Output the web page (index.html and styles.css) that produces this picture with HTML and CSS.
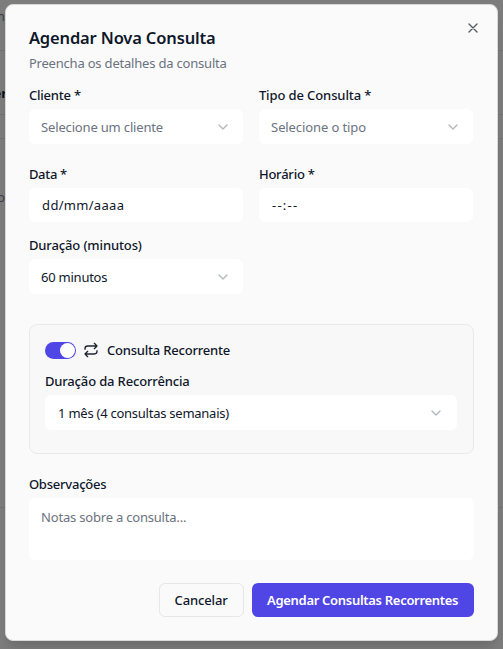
FILE: index.html
```html
<!DOCTYPE html>
<html lang="pt-BR">
<head>
<meta charset="utf-8">
<title>Agendar Nova Consulta</title>
<link rel="stylesheet" href="styles.css">
</head>
<body>
<div class="backdrop">
  <span class="behind behind-a">m</span>
  <span class="behind behind-b">er</span>
  <span class="behind behind-c">o</span>
  <i class="rule rule-a"></i><i class="rule rule-b"></i><i class="rule rule-c"></i><i class="rule rule-d"></i>
</div>
<main class="dialog">
  <button class="close" aria-label="Fechar"><svg width="16" height="16" viewBox="0 0 24 24"><path d="M18 6 6 18M6 6l12 12"/></svg></button>
  <h1><span class="t t-title">Agendar Nova Consulta</span></h1>
  <p class="subtitle"><span class="t t-sub">Preencha os detalhes da consulta</span></p>
  <div class="grid">
    <div class="field client">
      <label><span class="t t-client">Cliente *</span></label>
      <div class="control select muted"><span class="t t-selclient">Selecione um cliente</span><svg class="chev" viewBox="0 0 24 24"><path d="m6 9 6 6 6-6"/></svg></div>
    </div>
    <div class="field client">
      <label><span class="t t-type">Tipo de Consulta *</span></label>
      <div class="control select muted"><span class="t t-seltype">Selecione o tipo</span><svg class="chev" viewBox="0 0 24 24"><path d="m6 9 6 6 6-6"/></svg></div>
    </div>
    <div class="field date">
      <label><span class="t t-data">Data *</span></label>
      <div class="control input"><span class="t t-date">dd/mm/aaaa</span></div>
    </div>
    <div class="field date">
      <label><span class="t t-hour">Horário *</span></label>
      <div class="control input"><span class="t t-time">--:--</span></div>
    </div>
    <div class="field">
      <label><span class="t t-dur">Duração (minutos)</span></label>
      <div class="control select"><span class="t t-sixty">60 minutos</span><svg class="chev" viewBox="0 0 24 24"><path d="m6 9 6 6 6-6"/></svg></div>
    </div>
  </div>
  <section class="recurring">
    <div class="toggle-row">
      <span class="switch"><span class="knob"></span></span>
      <svg class="repeat" viewBox="0 0 24 24"><path d="m17 2 4 4-4 4M3 11v-1a4 4 0 0 1 4-4h14M7 22l-4-4 4-4M21 13v1a4 4 0 0 1-4 4H3"/></svg>
      <label><span class="t t-rec">Consulta Recorrente</span></label>
    </div>
    <label><span class="t t-recdur">Duração da Recorrência</span></label>
    <div class="control select month"><span class="t t-month">1 mês (4 consultas semanais)</span><svg class="chev" viewBox="0 0 24 24"><path d="m6 9 6 6 6-6"/></svg></div>
  </section>
  <div class="field notes">
    <label><span class="t t-obs">Observações</span></label>
    <div class="control area muted"><span class="t t-notes">Notas sobre a consulta...</span></div>
  </div>
  <footer>
    <button class="btn cancel"><span class="t t-cancel">Cancelar</span></button>
    <button class="btn primary"><span class="t t-submit">Agendar Consultas Recorrentes</span></button>
  </footer>
</main>
</body>
</html>
```
FILE: styles.css
```css
* { box-sizing: border-box; }
html, body { margin: 0; height: 100%; overflow: hidden; }
body {
  font: 13px/18px "Noto Sans", "Open Sans", sans-serif;
  color: #0f172a;
  background: #7d7d7d;
  padding: 4px 5px 8px 5px;
}
button { font: inherit; color: inherit; margin: 0; padding: 0; border: 0; background: none; }
svg { fill: none; stroke: currentColor; stroke-width: 2; stroke-linecap: round; stroke-linejoin: round; display: block; }
.t { white-space: nowrap; }
.t-title { letter-spacing: -.15px; }
.t-sub { letter-spacing: -.2px; }
.t-client { letter-spacing: -.2px; }
.t-selclient { letter-spacing: -.17px; }
.t-type { letter-spacing: -.11px; }
.t-seltype { letter-spacing: -.1px; }
.t-data { letter-spacing: -.3px; }
.t-date { letter-spacing: .3px; }
.t-time { letter-spacing: 1.2px; }
.t-hour { letter-spacing: -.22px; }
.t-dur { letter-spacing: -.12px; }
.t-sixty { letter-spacing: -.25px; }
.t-rec { letter-spacing: -.2px; }
.t-recdur { letter-spacing: -.15px; }
.t-month { letter-spacing: -.25px; }
.t-obs { letter-spacing: -.22px; }
.t-notes { letter-spacing: -.2px; }
.t-cancel { letter-spacing: -.12px; }
.t-submit { letter-spacing: -.3px; }

.backdrop { position: absolute; inset: 0; overflow: hidden; color: #3b3f47; }
.behind { position: absolute; line-height: 18px; }
.behind-a { right: 498px; top: 7px; }
.behind-b { right: 496px; top: 84px; font-weight: 700; color: #0b0f19; }
.behind-c { right: 498px; top: 188px; }
.rule { position: absolute; left: 0; right: 0; height: 1px; background: #737374; }
.rule-a { top: 50px; }
.rule-b { top: 114px; }
.rule-c { top: 138px; }
.rule-d { top: 507px; }

.dialog {
  position: relative;
  width: 493px;
  height: 637px;
  padding: 23px 23.4px 0 22.6px;
  background: #fafafa;
  border: 1px solid #d8d8da;
  border-radius: 8px;
  box-shadow: 0 8px 12px -3px rgba(0,0,0,.16);
}
.close { position: absolute; top: 15px; right: 16px; color: #565b66; }
h1 { margin: 0; font-size: 16.5px; line-height: 20px; font-weight: 600; }
.subtitle { margin: 6px 0 14px; line-height: 18px; color: #6b7280; }
.t-title, .t-sub, label .t { margin-left: .3px; }
.grid { display: grid; grid-template-columns: 214.5px 214.5px; column-gap: 15.5px; }
.field, .recurring { display: flex; flex-direction: column; }
label { display: block; height: 18px; line-height: 18px; font-weight: 500; }
.client { height: 79px; }
.date { height: 71px; }
.control {
  display: flex;
  align-items: center;
  justify-content: space-between;
  height: 35px;
  margin-top: 5px;
  padding: 0 12px 0 12.5px;
  background: #fff;
  border-radius: 6px;
}
.input { height: 34px; padding-left: 13.5px; }
.muted { color: #6b7280; }
.chev { width: 16px; height: 16px; color: #b4b7be; }
.recurring {
  height: 130px;
  margin-top: 30px;
  padding: 16px 16px 0 15px;
  background: #f8f8f8;
  border: 1px solid #e8e9ec;
  border-radius: 8px;
}
.toggle-row { display: flex; align-items: center; height: 18px; margin-bottom: 13px; }
.switch { width: 31px; height: 17px; padding: 1px; border-radius: 9px; background: #4f46e5; display: flex; justify-content: flex-end; }
.knob { width: 15px; height: 15px; border-radius: 50%; background: #fff; }
.repeat { width: 16px; height: 16px; margin: 0 7.5px; color: #1e2533; }
.month { padding: 0 12.5px 0 13.5px; }
.notes { margin-top: 21px; }
.area { height: 62px; align-items: flex-start; padding-top: 10px; }
footer { display: flex; justify-content: flex-end; gap: 8px; margin-top: 23px; }
.btn { height: 34px; border-radius: 6px; font-weight: 500; }
.cancel { width: 85px; border: 1px solid #e6e7ea; }
.primary { width: 222px; background: #4f46e5; color: #fff; font-weight: 600; }
```
